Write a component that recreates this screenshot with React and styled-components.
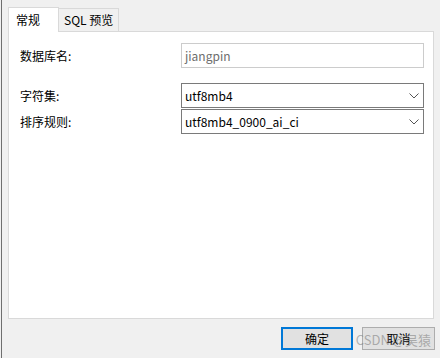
import React from "react";
import styled, { createGlobalStyle } from "styled-components";

const GlobalStyle = createGlobalStyle`
  html, body {
    margin: 0;
    padding: 0;
    background: #f0f0f0;
  }
  body {
    font-family: "Noto Sans CJK SC", "Liberation Sans", sans-serif;
    font-size: 12px;
    color: #000;
  }
`;

const Chevron = () => (
  <svg width="10" height="6" viewBox="0 0 10 6">
    <path d="M0.5 0.5 L5 5 L9.5 0.5" fill="none" stroke="#555" strokeWidth="1" />
  </svg>
);

export default function App() {
  return (
    <>
      <GlobalStyle />
      <Frame>
        <TabBar>
          <Tab active>常规</Tab>
          <Tab>SQL 预览</Tab>
        </TabBar>
        <Panel>
          <Row>
            <Label>数据库名:</Label>
            <Input disabled>jiangpin</Input>
          </Row>
          <Group>
            <Row>
              <Label>字符集:</Label>
              <Select>
                <span>utf8mb4</span>
                <Chevron />
              </Select>
            </Row>
            <Row>
              <Label>排序规则:</Label>
              <Select>
                <span>utf8mb4_0900_ai_ci</span>
                <Chevron />
              </Select>
            </Row>
          </Group>
        </Panel>
        <Footer>
          <Button primary>确定</Button>
          <Button>取消</Button>
          <Watermark>CSDN @吴猿</Watermark>
        </Footer>
      </Frame>
    </>
  );
}

const Frame = styled.div`
  position: relative;
  width: 438px;
  height: 358px;
  margin-left: 1px;
  border-left: 1px solid #6f6f6f;
  box-sizing: border-box;
  padding: 7px 6px 0 6px;
  display: flex;
  flex-direction: column;
`;

const TabBar = styled.div`
  display: flex;
  align-items: flex-end;
  height: 25px;
  margin-bottom: -1px;
  position: relative;
  z-index: 1;
`;

const Tab = styled.div`
  box-sizing: border-box;
  display: flex;
  align-items: center;
  height: ${(p) => (p.active ? "25px" : "24px")};
  width: ${(p) => (p.active ? "51px" : "60px")};
  padding-left: ${(p) => (p.active ? "7px" : "5px")};
  padding-bottom: ${(p) => (p.active ? "1px" : "0")};
  background: ${(p) => (p.active ? "#fff" : "#f0f0f0")};
  border: 1px solid #d9d9d9;
  border-left: ${(p) => (p.active ? "1px solid #d9d9d9" : "none")};
  border-bottom: ${(p) => (p.active ? "none" : "1px solid #d9d9d9")};
  line-height: 16px;
  white-space: nowrap;
`;

const Panel = styled.div`
  box-sizing: border-box;
  width: 426px;
  height: 288px;
  background: #fff;
  border: 1px solid #d9d9d9;
  padding: 11px 9px 0 11px;
  display: flex;
  flex-direction: column;
  gap: 15px;
`;

const Group = styled.div`
  display: flex;
  flex-direction: column;
  gap: 1px;
`;

const Row = styled.div`
  display: flex;
  align-items: center;
  height: 25px;
`;

const Label = styled.div`
  width: 161px;
  line-height: 16px;
`;

const Input = styled.div`
  box-sizing: border-box;
  flex: 1;
  height: 25px;
  border: 1px solid #cccccc;
  padding: 0 3px;
  display: flex;
  align-items: center;
  color: ${(p) => (p.disabled ? "#6d6d6d" : "#000")};
  line-height: 16px;
`;

const Select = styled.div`
  box-sizing: border-box;
  flex: 1;
  height: 25px;
  border: 1px solid #7a7a7a;
  padding: 0 4px 0 3px;
  display: flex;
  align-items: center;
  justify-content: space-between;
  line-height: 16px;
`;

const Footer = styled.div`
  display: flex;
  justify-content: flex-end;
  gap: 9px;
  padding: 8px 0 0 0;
  margin-right: -2px;
`;

const Button = styled.div`
  box-sizing: border-box;
  width: ${(p) => (p.primary ? "72px" : "73px")};
  height: 23px;
  display: flex;
  align-items: center;
  justify-content: center;
  background: #e1e1e1;
  border: ${(p) => (p.primary ? "2px solid #0078d7" : "1px solid #adadad")};
  line-height: 16px;
`;

const Watermark = styled.div`
  position: absolute;
  right: 8px;
  bottom: 9px;
  font-size: 13px;
  color: rgba(120, 120, 120, 0.55);
  white-space: nowrap;
  pointer-events: none;
`;
